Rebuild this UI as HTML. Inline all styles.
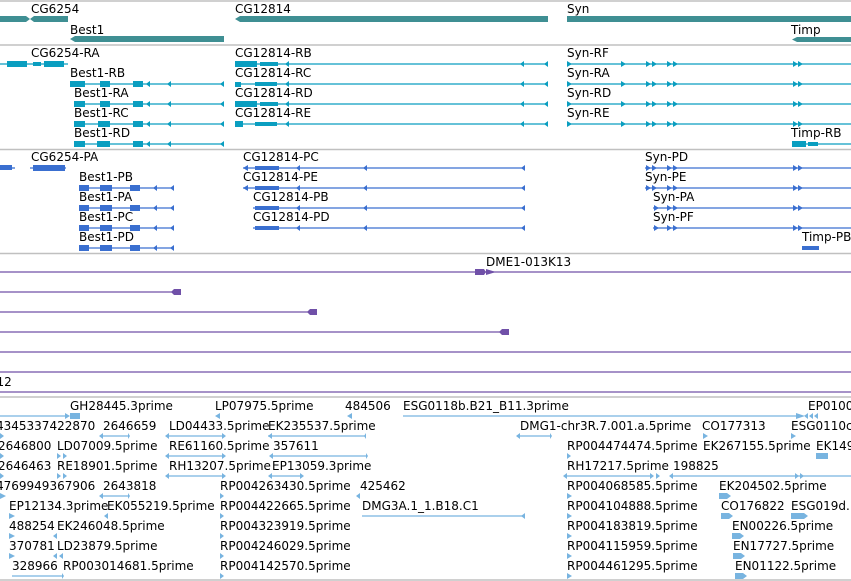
<!DOCTYPE html>
<html><head><meta charset="utf-8"><style>
html,body{margin:0;padding:0;background:#fff;width:851px;height:581px;overflow:hidden}
svg{display:block}
text{font-family:"DejaVu Sans","Liberation Sans",sans-serif;font-size:12px;fill:#000}
</style></head><body>
<svg width="851" height="581" viewBox="0 0 851 581" xmlns="http://www.w3.org/2000/svg">
<g stroke="#c0c0c0" stroke-width="1.5">
<line x1="0" y1="1" x2="851" y2="1"/><line x1="0" y1="45" x2="851" y2="45"/>
<line x1="0" y1="149.5" x2="851" y2="149.5"/><line x1="0" y1="253.5" x2="851" y2="253.5"/>
<line x1="0" y1="397" x2="851" y2="397"/><line x1="0" y1="580" x2="851" y2="580"/>
</g>
<!-- genes -->
<g fill="#3f8f93">
<path d="M0 16H26L30 19L34 16H68V22H34L30 19L26 22H0Z"/>
<path d="M240 16H548V22H240L235 19Z"/>
<rect x="567" y="16" width="284" height="6"/>
<path d="M75 36H224V42H75L70 39Z"/>
<path d="M797 37H851V42H797L792 39.5Z"/>
</g>
<text x="31" y="13">CG6254</text><text x="235" y="13">CG12814</text><text x="567" y="13">Syn</text>
<text x="70" y="34">Best1</text><text x="791" y="34">Timp</text>
<!-- transcripts -->
<g stroke="#0a9ec0" stroke-width="1.3">
<line x1="0" y1="64" x2="68" y2="64"/><line x1="235" y1="64" x2="548" y2="64"/><line x1="567" y1="64" x2="851" y2="64"/>
<line x1="70" y1="84" x2="224" y2="84"/><line x1="235" y1="84" x2="548" y2="84"/><line x1="567" y1="84" x2="851" y2="84"/>
<line x1="74" y1="104" x2="224" y2="104"/><line x1="235" y1="104" x2="548" y2="104"/><line x1="567" y1="104" x2="851" y2="104"/>
<line x1="74" y1="124" x2="224" y2="124"/><line x1="235" y1="124" x2="548" y2="124"/><line x1="567" y1="124" x2="851" y2="124"/>
<line x1="74" y1="144" x2="224" y2="144"/><line x1="792" y1="144" x2="851" y2="144"/>
</g>
<g fill="#0a9ec0">
<rect x="7" y="61" width="20" height="6"/><rect x="44" y="61" width="20" height="6"/><rect x="33" y="62" width="8" height="4"/>
<rect x="235" y="61" width="22" height="6"/><rect x="260" y="62" width="18" height="4"/>
<rect x="70" y="81" width="15" height="6"/><rect x="100" y="81" width="10" height="6"/><rect x="133" y="81" width="10" height="6"/>
<rect x="235" y="82" width="6" height="5"/><rect x="255" y="82" width="22" height="4"/>
<rect x="74" y="101" width="11" height="6"/><rect x="100" y="101" width="10" height="6"/><rect x="133" y="101" width="10" height="6"/>
<rect x="235" y="101" width="22" height="6"/><rect x="260" y="102" width="18" height="4"/>
<rect x="74" y="121" width="11" height="6"/><rect x="98" y="121" width="12" height="6"/><rect x="133" y="121" width="10" height="6"/>
<rect x="235" y="121" width="8" height="6"/><rect x="255" y="122" width="22" height="4"/>
<rect x="74" y="141" width="11" height="6"/><rect x="97" y="141" width="13" height="6"/><rect x="133" y="141" width="10" height="6"/>
<rect x="792" y="141" width="14" height="6"/><rect x="808" y="142" width="10" height="4"/>
</g>
<g fill="#0a9ec0">
<path id="la" d="M150 81L146 84L150 87Z"/>
</g>
<g fill="#0a9ec0">
<path d="M150 81l-4 3 4 3zM171 81l-4 3 4 3zM224 81l-4 3 4 3zM150 101l-4 3 4 3zM171 101l-4 3 4 3zM224 101l-4 3 4 3zM150 121l-4 3 4 3zM171 121l-4 3 4 3zM224 121l-4 3 4 3zM150 141l-4 3 4 3zM171 141l-4 3 4 3zM224 141l-4 3 4 3z
M524 61l-4 3 4 3zM548 61l-4 3 4 3zM524 81l-4 3 4 3zM548 81l-4 3 4 3zM524 101l-4 3 4 3zM548 101l-4 3 4 3zM524 121l-4 3 4 3zM548 121l-4 3 4 3zM289 61l-4 3 4 3zM289 81l-4 3 4 3zM289 101l-4 3 4 3zM289 121l-4 3 4 3z"/>
<path d="M567 61l5 3-5 3zM621 61l5 3-5 3zM646 61l5 3-5 3zM652 61l5 3-5 3zM667 61l5 3-5 3zM673 61l5 3-5 3zM793 61l5 3-5 3zM798 61l5 3-5 3z
M567 81l5 3-5 3zM621 81l5 3-5 3zM646 81l5 3-5 3zM652 81l5 3-5 3zM667 81l5 3-5 3zM673 81l5 3-5 3zM793 81l5 3-5 3zM798 81l5 3-5 3z
M567 101l5 3-5 3zM621 101l5 3-5 3zM646 101l5 3-5 3zM652 101l5 3-5 3zM667 101l5 3-5 3zM673 101l5 3-5 3zM793 101l5 3-5 3zM798 101l5 3-5 3z
M567 121l5 3-5 3zM621 121l5 3-5 3zM646 121l5 3-5 3zM652 121l5 3-5 3zM667 121l5 3-5 3zM673 121l5 3-5 3zM793 121l5 3-5 3zM798 121l5 3-5 3z"/>
</g>
<text x="31" y="57">CG6254-RA</text><text x="235" y="57">CG12814-RB</text><text x="567" y="57">Syn-RF</text>
<text x="70" y="77">Best1-RB</text><text x="235" y="77">CG12814-RC</text><text x="567" y="77">Syn-RA</text>
<text x="74" y="97">Best1-RA</text><text x="235" y="97">CG12814-RD</text><text x="567" y="97">Syn-RD</text>
<text x="74" y="117">Best1-RC</text><text x="235" y="117">CG12814-RE</text><text x="567" y="117">Syn-RE</text>
<text x="74" y="137">Best1-RD</text><text x="791" y="137">Timp-RB</text>
<!-- proteins -->
<g stroke="#3a6fd0" stroke-width="1.3">
<line x1="0" y1="168" x2="15" y2="168"/><line x1="30" y1="168" x2="66" y2="168"/>
<line x1="243" y1="168" x2="525" y2="168"/><line x1="645" y1="168" x2="851" y2="168"/>
<line x1="79" y1="188" x2="174" y2="188"/><line x1="243" y1="188" x2="525" y2="188"/><line x1="645" y1="188" x2="851" y2="188"/>
<line x1="79" y1="208" x2="174" y2="208"/><line x1="253" y1="208" x2="525" y2="208"/><line x1="653" y1="208" x2="851" y2="208"/>
<line x1="79" y1="228" x2="174" y2="228"/><line x1="253" y1="228" x2="525" y2="228"/><line x1="653" y1="228" x2="851" y2="228"/>
<line x1="79" y1="248" x2="174" y2="248"/><line x1="802" y1="248" x2="819" y2="248"/>
</g>
<g fill="#3a6fd0">
<rect x="0" y="165" width="12" height="5"/><rect x="33" y="165" width="32" height="6"/>
<rect x="79" y="185" width="10" height="6"/><rect x="100" y="185" width="12" height="6"/><rect x="130" y="185" width="10" height="6"/>
<rect x="79" y="205" width="10" height="6"/><rect x="100" y="205" width="12" height="6"/><rect x="130" y="205" width="10" height="6"/>
<rect x="79" y="225" width="10" height="6"/><rect x="100" y="225" width="12" height="6"/><rect x="130" y="225" width="10" height="6"/>
<rect x="79" y="245" width="10" height="6"/><rect x="100" y="245" width="12" height="6"/><rect x="130" y="245" width="10" height="6"/>
<rect x="255" y="166" width="24" height="4"/><rect x="255" y="186" width="24" height="4"/><rect x="255" y="206" width="24" height="4"/><rect x="255" y="226" width="24" height="4"/>
<rect x="802" y="246" width="17" height="4"/>
<path d="M248 165l-5 3 5 3zM248 185l-5 3 5 3zM300 165l-4 3 4 3zM300 185l-4 3 4 3zM300 205l-4 3 4 3zM300 225l-4 3 4 3zM367 165l-4 3 4 3zM367 185l-4 3 4 3zM367 205l-4 3 4 3zM367 225l-4 3 4 3zM525 165l-4 3 4 3zM525 185l-4 3 4 3zM525 205l-4 3 4 3zM525 225l-4 3 4 3z
M157 185l-4 3 4 3zM174 185l-4 3 4 3zM157 205l-4 3 4 3zM174 205l-4 3 4 3zM157 225l-4 3 4 3zM174 225l-4 3 4 3zM157 245l-4 3 4 3zM174 245l-4 3 4 3z"/>
<path d="M646 165l5 3-5 3zM652 165l5 3-5 3zM667 165l5 3-5 3zM673 165l5 3-5 3zM793 165l5 3-5 3zM798 165l5 3-5 3z
M646 185l5 3-5 3zM652 185l5 3-5 3zM667 185l5 3-5 3zM673 185l5 3-5 3zM793 185l5 3-5 3zM798 185l5 3-5 3z
M654 205l5 3-5 3zM667 205l5 3-5 3zM673 205l5 3-5 3zM793 205l5 3-5 3zM798 205l5 3-5 3z
M654 225l5 3-5 3zM667 225l5 3-5 3zM673 225l5 3-5 3zM793 225l5 3-5 3zM798 225l5 3-5 3z"/>
</g>
<text x="31" y="161">CG6254-PA</text><text x="243" y="161">CG12814-PC</text><text x="645" y="161">Syn-PD</text>
<text x="79" y="181">Best1-PB</text><text x="243" y="181">CG12814-PE</text><text x="645" y="181">Syn-PE</text>
<text x="79" y="201">Best1-PA</text><text x="253" y="201">CG12814-PB</text><text x="653" y="201">Syn-PA</text>
<text x="79" y="221">Best1-PC</text><text x="253" y="221">CG12814-PD</text><text x="653" y="221">Syn-PF</text>
<text x="79" y="241">Best1-PD</text><text x="802" y="241">Timp-PB</text>
<!-- purple -->
<g stroke="#7050a8" stroke-width="1.3">
<line x1="0" y1="272" x2="851" y2="272"/><line x1="0" y1="292" x2="175" y2="292"/>
<line x1="0" y1="312" x2="310" y2="312"/><line x1="0" y1="332" x2="503" y2="332"/>
<line x1="0" y1="352" x2="851" y2="352"/><line x1="0" y1="372" x2="851" y2="372"/><line x1="0" y1="392" x2="851" y2="392"/>
</g>
<g fill="#7050a8">
<path d="M475 269h9l2 3-2 3h-9zM486 269l10 3-10 3z"/>
<path d="M181 289v6h-7l-3-3 3-3z"/><path d="M317 309v6h-7l-3-3 3-3z"/><path d="M509 329v6h-7l-3-3 3-3z"/>
</g>
<text x="486" y="266">DME1-013K13</text><text x="-7" y="386">J12</text>
<!-- ESTs -->
<g stroke="#78b4e0" stroke-width="1.3">
<line x1="0" y1="416" x2="65" y2="416"/><line x1="403" y1="416" x2="800" y2="416"/>
<line x1="103" y1="436" x2="128" y2="436"/><line x1="169" y1="436" x2="222" y2="436"/><line x1="268" y1="436" x2="366" y2="436"/><line x1="520" y1="436" x2="550" y2="436"/>
<line x1="169" y1="456" x2="222" y2="456"/><line x1="272" y1="456" x2="366" y2="456"/>
<line x1="169" y1="476" x2="222" y2="476"/><line x1="272" y1="476" x2="300" y2="476"/><line x1="567" y1="476" x2="650" y2="476"/><line x1="673" y1="476" x2="851" y2="476"/>
<line x1="103" y1="496" x2="128" y2="496"/>
<line x1="362" y1="516" x2="525" y2="516"/>
<line x1="12" y1="576" x2="62" y2="576"/>
</g>
<g fill="#78b4e0">
<path d="M65 413l5 3-5 3zM70 413h10v6h-10z M220 413l-5 3 5 3v-6z M352 413l-5 3 5 3z M403 413v6 M796 413l9 3-9 3z M808 413l-4 3 4 3zM813 413l-4 3 4 3zM818 413l-4 3 4 3z"/>
<path d="M0 433l4 3-4 3zM103 433l-4 3 4 3zM128 433l2 3-2 3zM169 433l-4 3 4 3zM222 433l4 3-4 3zM272 433l-4 3 4 3zM366 433l-2 3 2 3zM520 433l-4 3 4 3zM550 433l2 3-2 3zM703 433l5 3-5 3zM791 433l5 3-5 3z"/>
<path d="M0 453l4 3-4 3zM57 453l4 3-4 3zM63 453l4 3-4 3zM169 453l-4 3 4 3zM222 453l4 3-4 3zM273 453l-4 3 4 3zM366 453l2 3-2 3zM567 453l4 3-4 3zM816 453h12v6h-12z"/>
<path d="M0 473l4 3-4 3zM57 473l4 3-4 3zM63 473l4 3-4 3zM169 473l-4 3 4 3zM222 473l4 3-4 3zM272 473l-4 3 4 3zM300 473l4 3-4 3zM567 473l-4 3 4 3zM650 473l4 3-4 3zM656 473l4 3-4 3zM673 473l-4 3 4 3zM795 473l4 3-4 3zM800 473l4 3-4 3z"/>
<path d="M0 493l6 3-6 3zM103 493l-4 3 4 3zM128 493l2 3-2 3zM220 493l4 3-4 3zM360 493l-4 3 4 3zM567 493l5 3-5 3zM719 493h8l4 3-4 3h-8z"/>
<path d="M9 513l6 3-6 3zM108 513l-4 3 4 3zM220 513l4 3-4 3zM362 513v6zM525 513l-4 3 4 3zM567 513l5 3-5 3zM721 513h8l4 3-4 3h-8zM791 513h13l4 3-4 3h-13z"/>
<path d="M9 533l6 3-6 3zM57 533l-4 3 4 3zM220 533l4 3-4 3zM567 533l5 3-5 3zM732 533h8l4 3-4 3h-8z"/>
<path d="M9 553l6 3-6 3zM57 553l-4 3 4 3zM63 553l-4 3 4 3zM220 553l4 3-4 3zM567 553l5 3-5 3zM733 553h8l4 3-4 3h-8z"/>
<path d="M62 573l2 3-2 3zM220 573l4 3-4 3zM567 573l5 3-5 3zM735 573h8l4 3-4 3h-8z"/>
</g>
<text x="70" y="410">GH28445.3prime</text><text x="215" y="410">LP07975.5prime</text><text x="345" y="410">484506</text><text x="403" y="410">ESG0118b.B21_B11.3prime</text><text x="808" y="410">EP0100C</text>
<text x="-4" y="430">4345337422870</text><text x="103" y="430">2646659</text><text x="169" y="430">LD04433.5prime</text><text x="268" y="430">EK235537.5prime</text><text x="520" y="430">DMG1-chr3R.7.001.a.5prime</text><text x="702" y="430">CO177313</text><text x="791" y="430">ESG0110c</text>
<text x="-2" y="450">2646800</text><text x="57" y="450">LD07009.5prime</text><text x="169" y="450">RE61160.5prime</text><text x="273" y="450">357611</text><text x="567" y="450">RP004474474.5prime</text><text x="703" y="450">EK267155.5prime</text><text x="816" y="450">EK149</text>
<text x="-2" y="470">2646463</text><text x="57" y="470">RE18901.5prime</text><text x="169" y="470">RH13207.5prime</text><text x="272" y="470">EP13059.3prime</text><text x="567" y="470">RH17217.5prime</text><text x="673" y="470">198825</text>
<text x="-4" y="490">4769949367906</text><text x="103" y="490">2643818</text><text x="220" y="490">RP004263430.5prime</text><text x="360" y="490">425462</text><text x="567" y="490">RP004068585.5prime</text><text x="719" y="490">EK204502.5prime</text>
<text x="9" y="510">EP12134.3prime</text><text x="107" y="510">EK055219.5prime</text><text x="220" y="510">RP004422665.5prime</text><text x="362" y="510">DMG3A.1_1.B18.C1</text><text x="567" y="510">RP004104888.5prime</text><text x="721" y="510">CO176822</text><text x="791" y="510">ESG019d.I</text>
<text x="9" y="530">488254</text><text x="57" y="530">EK246048.5prime</text><text x="220" y="530">RP004323919.5prime</text><text x="567" y="530">RP004183819.5prime</text><text x="732" y="530">EN00226.5prime</text>
<text x="9" y="550">370781</text><text x="57" y="550">LD23879.5prime</text><text x="220" y="550">RP004246029.5prime</text><text x="567" y="550">RP004115959.5prime</text><text x="733" y="550">EN17727.5prime</text>
<text x="12" y="570">328966</text><text x="63" y="570">RP003014681.5prime</text><text x="220" y="570">RP004142570.5prime</text><text x="567" y="570">RP004461295.5prime</text><text x="735" y="570">EN01122.5prime</text>
</svg>
</body></html>
